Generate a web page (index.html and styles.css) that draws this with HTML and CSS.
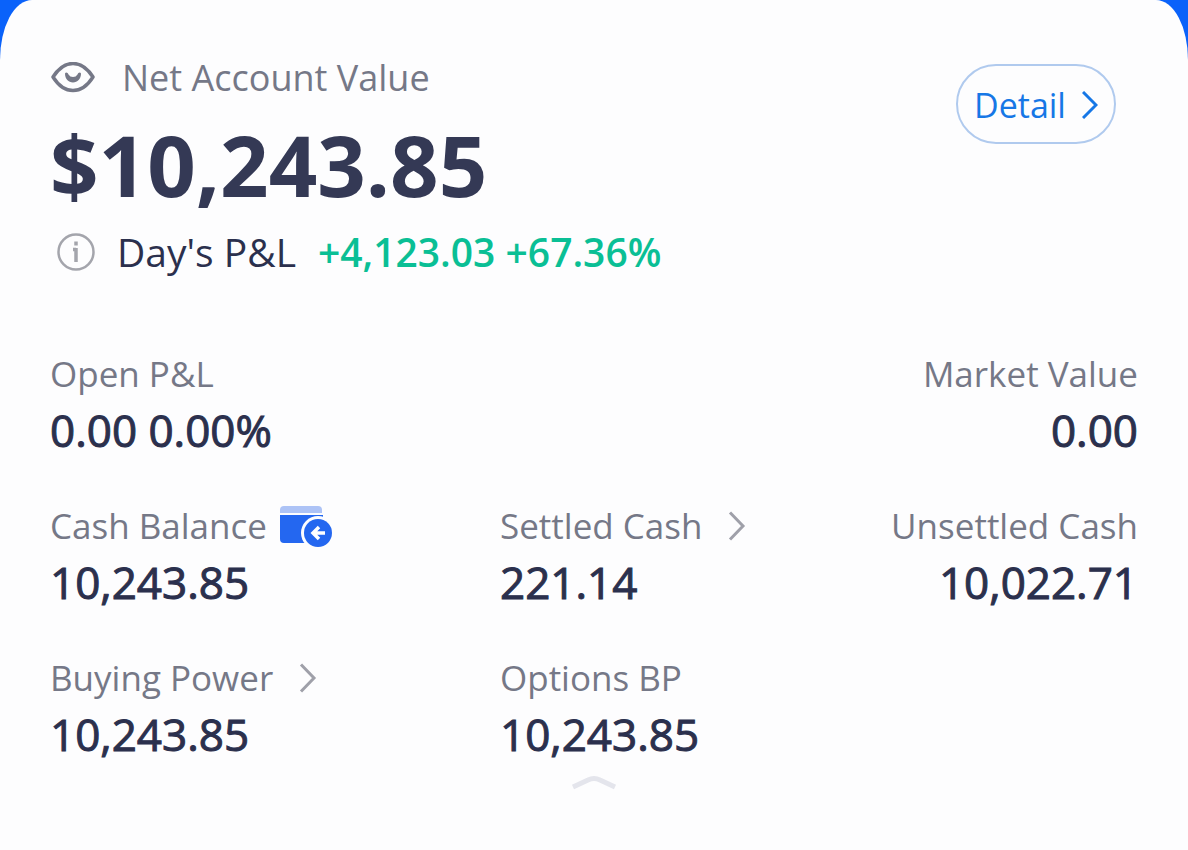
FILE: index.html
```html
<!DOCTYPE html>
<html lang="en">
<head>
<meta charset="utf-8">
<meta name="viewport" content="width=device-width, initial-scale=1">
<title>Account</title>
<link rel="stylesheet" href="styles.css">
</head>
<body>
<main class="card">
  <header class="summary">
    <div class="summary-main">
      <div class="net-label">
        <button class="icon-button" type="button" aria-label="Hide values">
          <svg class="eye" viewBox="0 0 46 32" fill="none" stroke="#757887"><path d="M3 15C9 5.500 15 1.500 23 1.500S37 5.500 43 15C37 24.500 31 28.500 23 28.500S9 24.500 3 15Z" stroke-width="3.500" stroke-linejoin="round"/><path d="M15 11.500C16 9.500 18 11 18.500 12.500Q20 15 23 15T27.500 12.500C28 11 30 9.500 31 11.500C31 17 27.500 20.500 23 20.500S15 17 15 11.500Z" fill="#757887" stroke="none"/></svg>
        </button>
        <span>Net Account Value</span>
      </div>
      <h1 class="net-value">$10,243.85</h1>
      <div class="day">
        <button class="icon-button" type="button" aria-label="About day's P&amp;L">
          <svg class="info" viewBox="0 0 38 38" fill="none" stroke="#a4a5ac"><circle cx="19" cy="19" r="17.500" stroke-width="2.500"/><path d="M16 16.500h3M19 15v14M19 8.500v4" stroke-width="3.500"/></svg>
        </button>
        <span>Day's P&amp;L</span>
        <strong class="gain">+4,123.03 +67.36%</strong>
      </div>
    </div>
    <button class="detail" type="button">Detail
      <svg class="detail-arrow" viewBox="0 0 16 28" fill="none" stroke="#1677e6" stroke-width="3"><path d="M1 1l13 13L1 27"/></svg>
    </button>
  </header>

  <dl class="stats">
    <div class="stat">
      <dt>Open P&amp;L</dt>
      <dd>0.00 0.00%</dd>
    </div>
    <div class="stat end last">
      <dt>Market Value</dt>
      <dd>0.00</dd>
    </div>
    <div class="stat">
      <dt>Cash Balance
        <svg class="wallet" viewBox="0 0 54 44"><path d="M1 9V6a4 4 0 0 1 4-4h34a4 4 0 0 1 4 4v3z" fill="#adc3f6"/><path d="M1 11h43v12H30v16H5a4 4 0 0 1-4-4z" fill="#2467f0"/><circle cx="39" cy="29" r="17" fill="#fdfdfe"/><circle cx="39" cy="29" r="14" fill="#2467f0"/><path d="M46 29H34M40 23l-6 6 6 6" fill="none" stroke="#fff" stroke-width="3.500"/></svg>
      </dt>
      <dd>10,243.85</dd>
    </div>
    <div class="stat">
      <dt>Settled Cash
        <svg class="chevron" viewBox="0 0 18 30" fill="none" stroke="#9fa0a9" stroke-width="3"><path d="M2 1.500l13 13.500L2 28.500"/></svg>
      </dt>
      <dd>221.14</dd>
    </div>
    <div class="stat end">
      <dt>Unsettled Cash</dt>
      <dd>10,022.71</dd>
    </div>
    <div class="stat">
      <dt>Buying Power
        <svg class="chevron" viewBox="0 0 18 30" fill="none" stroke="#9fa0a9" stroke-width="3"><path d="M2 1.500l13 13.500L2 28.500"/></svg>
      </dt>
      <dd>10,243.85</dd>
    </div>
    <div class="stat">
      <dt>Options BP</dt>
      <dd>10,243.85</dd>
    </div>
  </dl>
  <button class="collapse" type="button" aria-label="Collapse">
    <svg class="collapse-icon" viewBox="0 0 46 16" fill="none" stroke="#e4e5ec" stroke-width="5"><path d="M2 13L17 6Q23 3 29 6L44 13"/></svg>
  </button>
</main>
</body>
</html>
```
FILE: styles.css
```css
* { box-sizing: border-box; }
body {
  margin: 0;
  background: #0a62fa;
  font-family: "Open Sans", "Noto Sans", sans-serif;
  color: #2b304d;
}
button {
  border: 0;
  padding: 0;
  background: none;
  font: inherit;
  color: inherit;
}
svg { display: block; flex: none; }
.card {
  min-height: 100vh;
  padding: 56px 50px 24px;
  background: #fdfdfe;
  border-radius: 32px 32px 0 0 / 60px 60px 0 0;
}
.summary {
  display: flex;
  justify-content: space-between;
  align-items: flex-start;
  padding-right: 22px;
}
.net-label {
  display: flex;
  align-items: center;
  gap: 26px;
  font-size: 36px;
  line-height: 44px;
  color: #757887;
}
.eye { width: 46px; height: 32px; }
.net-value {
  margin: 0;
  font-size: 85px;
  line-height: 128px;
  font-weight: 700;
  color: #343955;
}
.day {
  display: flex;
  align-items: center;
  gap: 22px;
  padding-left: 7px;
  font-size: 39px;
  line-height: 48px;
}
.info { width: 38px; height: 38px; }
.gain {
  font-weight: 600;
  color: #0abf95;
}
.detail {
  display: flex;
  align-items: center;
  justify-content: center;
  gap: 16px;
  width: 160px;
  height: 80px;
  padding-top: 2px;
  margin-top: 8px;
  border: 2px solid #b0caee;
  border-radius: 40px;
  font-size: 34px;
  color: #1677e6;
}
.detail-arrow { width: 16px; height: 28px; }
.stats {
  display: grid;
  grid-template-columns: 450px 1fr 1fr;
  row-gap: 44px;
  margin: 74px 0 0;
}
.stat dt {
  display: flex;
  align-items: center;
  gap: 12px;
  font-size: 35px;
  line-height: 48px;
  color: #757887;
}
.stat dd {
  margin: 4px 0 0;
  font-size: 44px;
  line-height: 56px;
  -webkit-text-stroke: 1px;
}
.end { text-align: right; }
.end dt { justify-content: flex-end; }
.last { grid-column: 3; }
.wallet { width: 54px; height: 44px; }
.chevron { width: 18px; height: 30px; margin-left: 14px; }
.collapse { display: block; margin: 12px auto 0; }
.collapse-icon { width: 46px; height: 16px; }
```
